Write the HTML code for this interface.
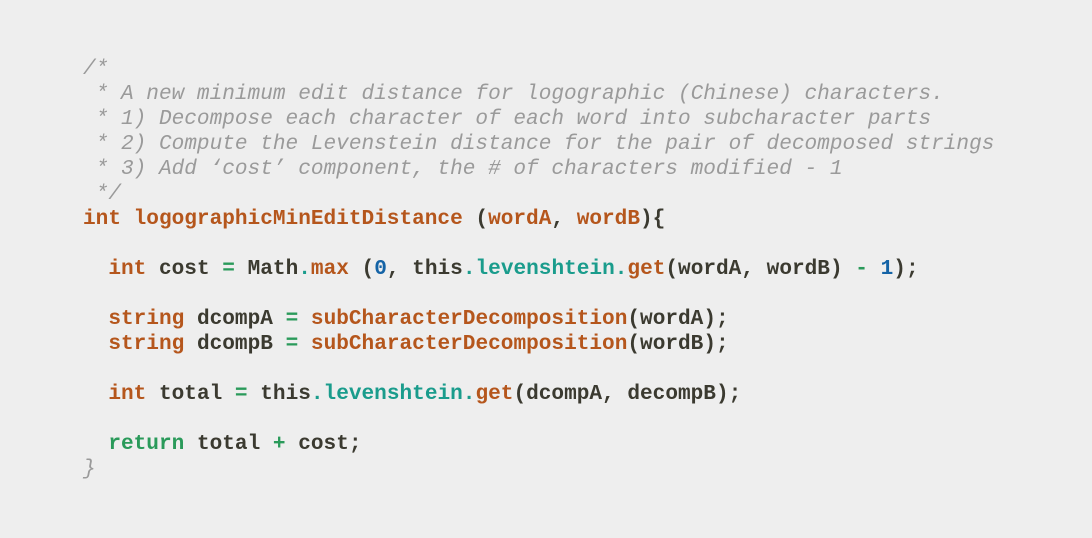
<!DOCTYPE html>
<html><head><meta charset="utf-8"><style>
html,body{margin:0;padding:0;background:#eeeeee;width:1092px;height:538px;overflow:hidden}
pre{margin:0;position:absolute;left:83px;top:57px;font-family:"Liberation Mono",monospace;font-size:21.1px;line-height:25px;color:#3b3a30;font-weight:bold}
.c{color:#9a9a9a;font-style:italic;font-weight:normal}
.k{color:#b5561c}
.g{color:#2a9a5a}
.t{color:#1a9c8c}
.n{color:#1463a6}
</style></head><body>
<pre><span class="c">/*
 * A new minimum edit distance for logographic (Chinese) characters.
 * 1) Decompose each character of each word into subcharacter parts
 * 2) Compute the Levenstein distance for the pair of decomposed strings
 * 3) Add ‘cost’ component, the # of characters modified - 1
 */</span>
<span class="k">int logographicMinEditDistance</span> (<span class="k">wordA</span>, <span class="k">wordB</span>){

  <span class="k">int</span> cost <span class="g">=</span> Math<span class="t">.</span><span class="k">max</span> (<span class="n">0</span>, this<span class="t">.levenshtein.</span><span class="k">get</span>(wordA, wordB) <span class="g">-</span> <span class="n">1</span>);

  <span class="k">string</span> dcompA <span class="g">=</span> <span class="k">subCharacterDecomposition</span>(wordA);
  <span class="k">string</span> dcompB <span class="g">=</span> <span class="k">subCharacterDecomposition</span>(wordB);

  <span class="k">int</span> total <span class="g">=</span> this<span class="t">.levenshtein.</span><span class="k">get</span>(dcompA, decompB);

  <span class="g">return</span> total <span class="g">+</span> cost;
<span class="c">}</span></pre>
</body></html>
